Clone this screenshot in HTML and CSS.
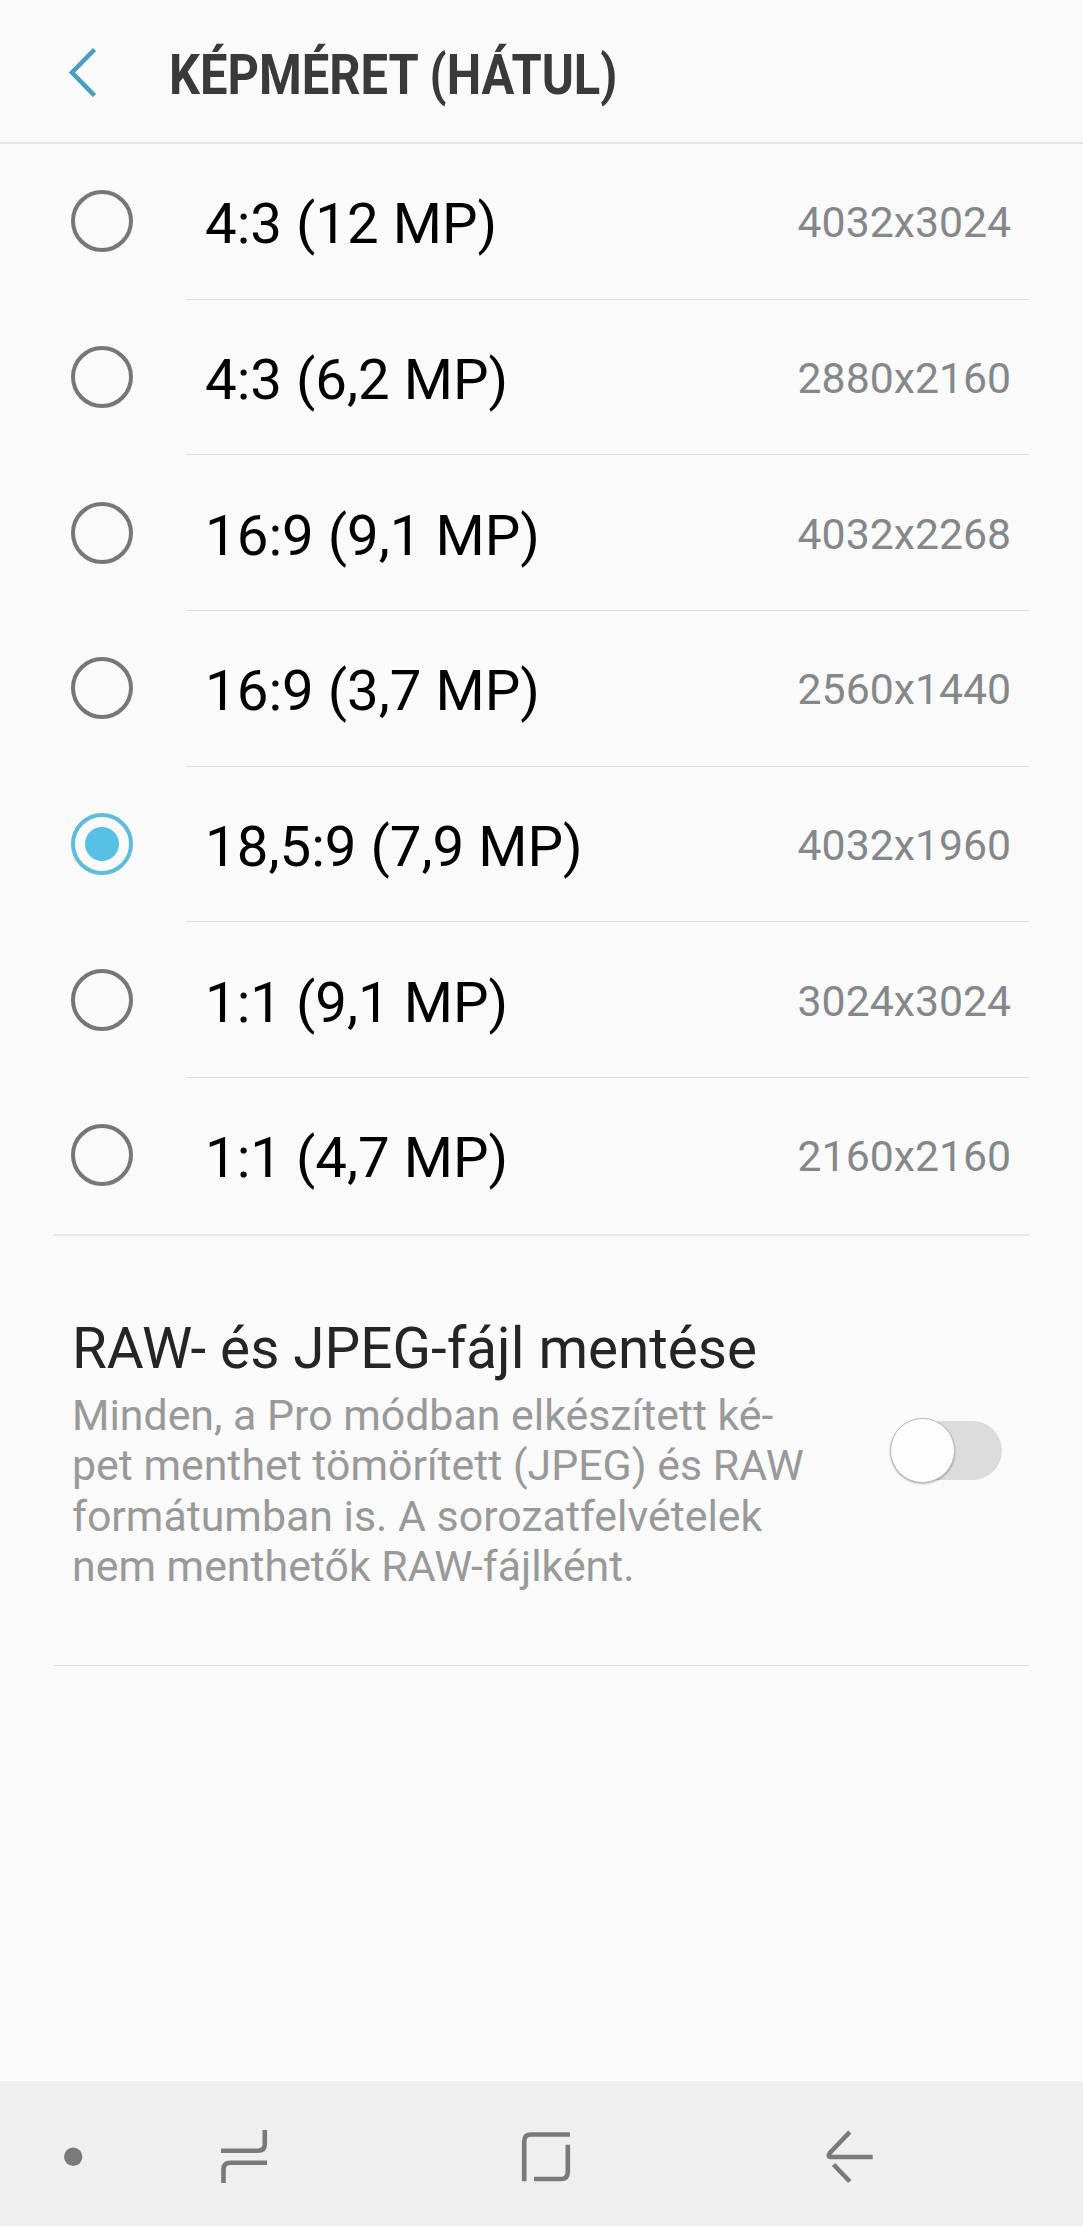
FILE: index.html
```html
<!DOCTYPE html>
<html lang="hu">
<head>
    <meta charset="UTF-8">
    <meta name="viewport" content="width=device-width, initial-scale=1.0">
    <title>Képméret (hátul)</title>
    <link rel="stylesheet" href="styles.css">
</head>
<body>
    <div class="screen">
        <header class="header">
            <svg class="back" width="30" height="50" viewBox="0 0 30 50"><path d="M27.5 2.5 L5 25.5 L27.5 48.5"/></svg>
            <h1 class="title">KÉPMÉRET (HÁTUL)</h1>
        </header>

        <main class="content">
            <ul class="sizes">
                <li class="size"><span class="radio"></span><div class="row"><span class="name">4:3 (12 MP)</span><span class="pixels">4032x3024</span></div></li>
                <li class="size"><span class="radio"></span><div class="row"><span class="name">4:3 (6,2 MP)</span><span class="pixels">2880x2160</span></div></li>
                <li class="size"><span class="radio"></span><div class="row"><span class="name">16:9 (9,1 MP)</span><span class="pixels">4032x2268</span></div></li>
                <li class="size"><span class="radio"></span><div class="row"><span class="name">16:9 (3,7 MP)</span><span class="pixels">2560x1440</span></div></li>
                <li class="size"><span class="radio checked"></span><div class="row"><span class="name">18,5:9 (7,9 MP)</span><span class="pixels">4032x1960</span></div></li>
                <li class="size"><span class="radio"></span><div class="row"><span class="name">1:1 (9,1 MP)</span><span class="pixels">3024x3024</span></div></li>
                <li class="size"><span class="radio"></span><div class="row"><span class="name">1:1 (4,7 MP)</span><span class="pixels">2160x2160</span></div></li>
            </ul>

            <section class="raw">
                <div class="raw-text">
                    <h2 class="raw-title">RAW- és JPEG-fájl mentése</h2>
                    <p class="raw-desc">Minden, a Pro módban elkészített ké-<br>pet menthet tömörített (JPEG) és RAW<br>formátumban is. A sorozatfelvételek<br>nem menthetők RAW-fájlként.</p>
                </div>
                <div class="switch"><div class="knob"></div></div>
            </section>
        </main>

        <nav class="navbar">
            <svg width="1083" height="145" viewBox="0 0 1083 145">
                <circle class="dot" cx="73.2" cy="75.7" r="9.2"/>
                <path d="M221 69.7 H258 Q264.8 69.7 264.8 63 V49 M267 81.8 H230.5 Q223.5 81.8 223.5 88.5 V102"/>
                <path d="M570 53.5 H531 Q524.2 53.5 524.2 60.5 V100.3 M534 98 H561 Q567.8 98 567.8 91 V63.7"/>
                <path d="M849.8 51 L829.8 72 Q827 76 831.5 76 H872.7 M833.5 83.5 L849.8 100.5"/>
            </svg>
        </nav>
    </div>
</body>
</html>
```

FILE: styles.css
```css
:root {
    --color-bg: #fafafa;
    --color-line: #e5e5e5;
    --color-accent: #56c0e5;
    --color-gray: #85888a;
}

* {
    box-sizing: border-box;
}

body {
    margin: 0;
    background: var(--color-bg);
    font-family: Roboto, sans-serif;
}

.screen {
    display: flex;
    flex-direction: column;
    width: 1083px;
    height: 2226px;
    overflow: hidden;
}

.header {
    display: flex;
    align-items: center;
    height: 144px;
    padding-left: 67px;
    border-bottom: 2px solid var(--color-line);
}

.back {
    margin-top: 1px;
    fill: none;
    stroke: #4a9fbd;
    stroke-width: 4.6;
}

.title {
    margin: 7px 0 0 72px;
    color: #3a3a3a;
    font-size: 56.4px;
    font-weight: 700;
    white-space: nowrap;
    /* condensed look */
    transform: scaleX(0.866);
    transform-origin: 0 50%;
}

.content {
    flex: 1;
}

.sizes {
    margin: 0 54px;
    padding: 0;
    list-style: none;
    border-bottom: 2px solid #e8e8e8;
}

.size {
    display: flex;
    align-items: center;
    height: 155.7px;
    padding-left: 17px;
}

.radio {
    width: 62px;
    height: 62px;
    margin-bottom: 1px;
    border: 4px solid #777;
    border-radius: 50%;
}

.radio.checked {
    padding: 10px;
    border-color: #60bcdb;
    background: var(--color-accent) content-box;
}

.row {
    display: flex;
    flex: 1;
    align-items: center;
    justify-content: space-between;
    height: 100%;
    margin-left: 53px;
    padding: 3px 18px 0 19px;
    border-bottom: 1px solid #e0e0e0;
}

.size:last-child .row {
    border-color: transparent;
}

.name {
    margin-top: 3px;
    color: #000;
    font-size: 56.4px;
}

.pixels {
    margin-bottom: 1px;
    color: var(--color-gray);
    font-size: 42.75px;
}

.raw {
    display: flex;
    justify-content: space-between;
    height: 430.5px;
    margin: 0 54px;
    padding: 77px 27px 0 18px;
    border-bottom: 1px solid #e0e0e0;
}

.raw-title {
    margin: 0;
    color: #252525;
    font-size: 56.6px;
    font-weight: 400;
    line-height: 72px;
}

.raw-desc {
    margin: 5px 0 0;
    color: #999;
    font-size: 42.85px;
    line-height: 50.4px;
    white-space: nowrap;
}

.switch {
    display: flex;
    width: 110px;
    height: 59px;
    margin-top: 108px;
    border-radius: 30px;
    background: #dcdcdc;
}

.knob {
    width: 65px;
    height: 65px;
    margin: -3px 0 0 -2px;
    border: 1px solid #bbb;
    border-radius: 50%;
    background: #fdfdfd;
    box-shadow: 0 1px 2px rgba(0, 0, 0, 0.3);
}

.navbar {
    height: 145px;
    background: #efefef;
}

.navbar path {
    fill: none;
    stroke: #7a7a7a;
    stroke-width: 4.6;
}

.dot {
    fill: #7a7a7a;
}
```
